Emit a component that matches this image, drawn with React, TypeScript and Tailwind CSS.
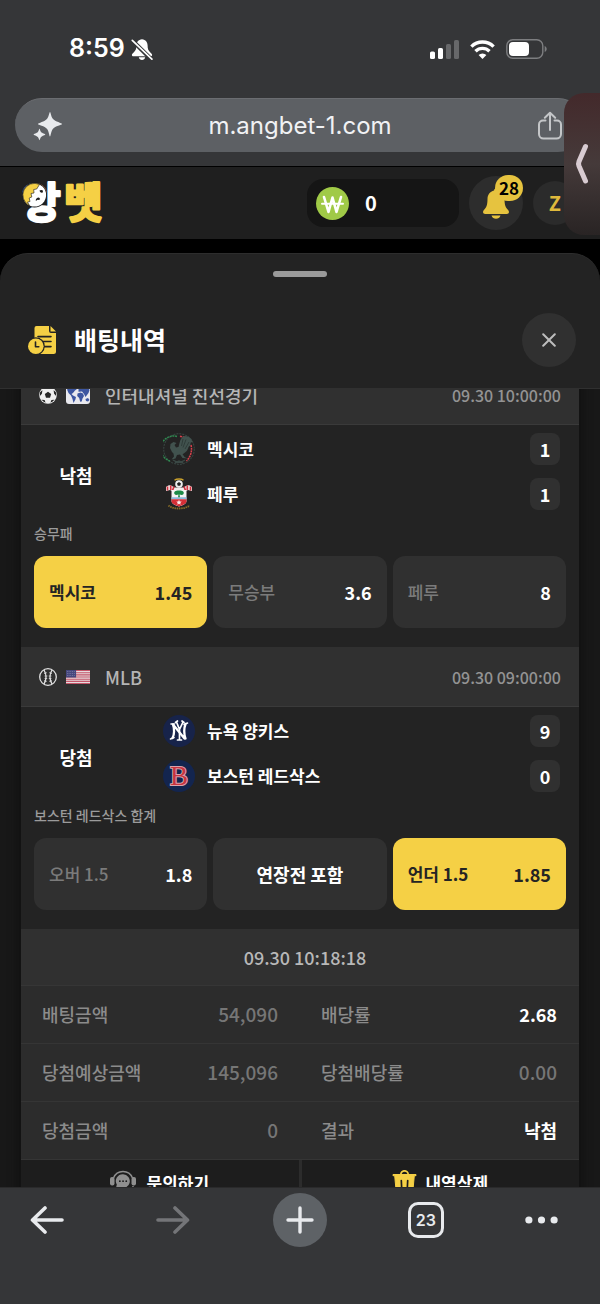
import type { ReactNode } from "react";

const YELLOW = "#f5d045";

function BellOffIcon() {
  return (
    <svg width="22" height="23" viewBox="0 0 22 23" aria-hidden="true">
      <path
        d="M11 1.200c-3.700.5-5.600 3-5.600 6.400 0 3.300-.7 4.900-2.500 6.600C1.700 15.300.900 15.900.900 16.900c0 .8.6 1.300 1.500 1.300h17.200c.9 0 1.500-.5 1.500-1.300 0-1-.8-1.600-2-2.700-1.800-1.700-2.500-3.300-2.500-6.600 0-3.400-1.900-5.900-5.600-6.400z"
        fill="#fff"
      />
      <path d="M7.800 19.300h6.400c-.4 1.700-1.600 2.700-3.200 2.700s-2.800-1-3.200-2.700z" fill="#fff" />
      <path d="M2 3.300l18 17.600" stroke="#353638" strokeWidth="4.200" />
      <path d="M1.300 2.300l19.600 18.900" stroke="#fff" strokeWidth="1.700" strokeLinecap="round" />
    </svg>
  );
}

function SignalIcon() {
  return (
    <svg width="29" height="19" viewBox="0 0 29 19" aria-hidden="true">
      <rect x="0" y="11.500" width="5" height="7.500" rx="1.600" fill="#fff" />
      <rect x="8" y="8" width="5" height="11" rx="1.600" fill="#fff" />
      <rect x="16" y="4" width="5" height="15" rx="1.600" fill="#67686a" />
      <rect x="24" y="0" width="5" height="19" rx="1.600" fill="#67686a" />
    </svg>
  );
}

function WifiIcon() {
  return (
    <svg width="25" height="19" viewBox="0 0 25 19" fill="none" stroke="#fff" strokeWidth="3.400" aria-hidden="true">
      <path d="M1.400 6.600a15.700 15.700 0 0 1 22.200 0" />
      <path d="M5.500 11.300a9.900 9.900 0 0 1 14 0" />
      <path d="M12.500 19l-3.900-4a5.500 5.500 0 0 1 7.800 0z" fill="#fff" stroke="none" />
    </svg>
  );
}

function BatteryIcon() {
  return (
    <svg width="41" height="20" viewBox="0 0 41 20" aria-hidden="true">
      <rect x=".8" y=".8" width="36" height="18.400" rx="6" fill="none" stroke="#7d7e80" strokeWidth="1.400" />
      <rect x="3" y="3" width="20" height="14" rx="4" fill="#fff" />
      <path d="M38.700 7c1.200.5 2 1.600 2 3s-.8 2.500-2 3z" fill="#7d7e80" />
    </svg>
  );
}

function SparkleIcon() {
  return (
    <svg width="30" height="30" viewBox="0 0 30 30" fill="#e8eaed" aria-hidden="true">
      <path d="M17 1c.7 0 .9 4.300 2.800 6.800C22.200 10.800 29 12 29 13s-6.800 2-9.200 5c-1.900 2.500-2.100 7.500-2.800 7.500s-1-5-2.900-7.500c-2.300-3-9.100-4-9.100-5s6.800-2.200 9.100-5.200C16 5.300 16.300 1 17 1z" />
      <path d="M6.500 17.700c.4 0 .6 2.200 1.500 3.300 1.200 1.300 4.300 1.900 4.300 2.500S9.200 24.800 8 26.100c-.9 1.100-1.100 3.200-1.500 3.200s-.7-2.100-1.600-3.200C3.700 24.800.600 24.100.600 23.500S3.700 22.300 4.900 21c.9-1.100 1.200-3.300 1.600-3.300z" />
    </svg>
  );
}

function ShareIcon() {
  return (
    <svg width="26" height="30" viewBox="0 0 26 30" fill="none" stroke="#c4c6c8" strokeWidth="2" strokeLinecap="round" strokeLinejoin="round" aria-hidden="true">
      <path d="M8.500 9.500H6a4 4 0 0 0-4 4V23a4.500 4.500 0 0 0 4.500 4.500h13A4.500 4.500 0 0 0 24 23v-9.500a4 4 0 0 0-4-4h-2.500" />
      <path d="M13 19V2M7.800 6.800L13 1.800l5.200 5" />
    </svg>
  );
}

function Logo() {
  return (
    <svg width="86" height="48" viewBox="0 0 86 48" role="img" aria-label="앙벳">
      <g fontFamily="'Noto Sans CJK KR', sans-serif" fontWeight="700" fontSize="42" strokeLinejoin="round" strokeLinecap="round" strokeWidth="2.600">
        <text x="1" y="39" fill="#fff" stroke="#fff">앙</text>
        <text x="43" y="39" fill={YELLOW} stroke={YELLOW}>벳</text>
      </g>
      <circle cx="13.500" cy="16" r="12.500" fill="#1a1a1a" />
      <circle cx="13.500" cy="16" r="11.600" fill="#fff" />
      <path d="M18.500 5.500A11.600 11.600 0 1 0 8.500 26.500l-2-3.500 2.500-.5-.8-3.500 2.600-1-.8-3.500 3-.5-.3-3.500 3-.5z" fill={YELLOW} stroke="#1a1a1a" strokeWidth=".6" strokeLinejoin="round" />
      <path d="M18.500 11.500c1.200-.9 2.500-.8 3.600.2l-.6 2c-1 .2-2-.2-2.500-1zM14.800 22c-.2-1.900 1-3.400 3.200-3.400l1.200 1.300c-.5.9-1.500 1.300-2.600.9z" fill="#1a1a1a" />
    </svg>
  );
}

function WonIcon() {
  return (
    <svg width="33" height="33" viewBox="0 0 33 33" aria-hidden="true">
      <circle cx="16.500" cy="16.500" r="16.500" fill="#a0ca47" />
      <g fill="none" stroke="#fff" strokeLinejoin="round" strokeLinecap="round">
        <path d="M8 10l4.500 15 4-14.500 4 14.500L25 10" strokeWidth="2.600" />
        <path d="M6 16.700h21" strokeWidth="2" />
      </g>
    </svg>
  );
}

function BellIcon() {
  return (
    <svg width="26" height="31" viewBox="0 0 26 31" fill="#e6c33f" aria-hidden="true">
      <path d="M11 2.500a2 2 0 0 1 4 0c4 1 6.500 4.300 6.500 8.500 0 6 1 8.300 3.600 11 1.600 1.700.9 4-1.400 4H2.300C0 26-.7 23.700.9 22c2.600-2.700 3.600-5 3.600-11 0-4.200 2.500-7.500 6.500-8.500z" />
      <path d="M8.500 27.500h9c-.7 2.200-2.400 3.300-4.500 3.300s-3.800-1.100-4.500-3.300z" />
    </svg>
  );
}

function HistoryIcon() {
  return (
    <svg width="28" height="28" viewBox="0 0 28 28" aria-hidden="true">
      <path d="M8.500 0H21v5a2 2 0 0 0 2 2h5v18.500a2.500 2.500 0 0 1-2.500 2.500H12V12H6.500V2a2 2 0 0 1 2-2z" fill={YELLOW} />
      <path d="M22.500 0L28 5.500h-5.500z" fill={YELLOW} />
      <path d="M10 10.600h13M14 15.500h9M15 20.600h8" stroke="#232323" strokeWidth="1.600" strokeLinecap="round" />
      <circle cx="7.800" cy="20.200" r="9" fill="#232323" />
      <circle cx="7.800" cy="20.200" r="7.800" fill={YELLOW} />
      <path d="M7.500 16v4.700h3.300" fill="none" stroke="#232323" strokeWidth="1.600" strokeLinecap="round" strokeLinejoin="round" />
    </svg>
  );
}

function SoccerIcon() {
  return (
    <svg width="18" height="18" viewBox="0 0 18 18" aria-hidden="true">
      <circle cx="9" cy="9" r="8.800" fill="#efefef" />
      <g fill="#262626">
        <path d="M9 5.700l3.200 2.300-1.200 3.800H7L5.800 8z" />
        <path d="M6 1.300L9 3l3-1.700a8.300 8.300 0 0 0-6 0zM1 6.500L.9 10l2-2.200.5-3.500A8 8 0 0 0 1 6.500zM17 6.500l.1 3.500-2-2.200-.5-3.500A8 8 0 0 1 17 6.500zM2.600 13.800l3 .1 1 2.900a8 8 0 0 1-4-3zM15.400 13.800l-3 .1-1 2.900a8 8 0 0 0 4-3z" />
      </g>
    </svg>
  );
}

function WorldFlag() {
  return (
    <svg width="24" height="18" viewBox="0 0 24 18" aria-hidden="true">
      <rect width="24" height="18" rx="3" fill="#e9e9ee" />
      <g fill="#3d56a0">
        <path d="M1 3.500L5 1h5l1 2-2 1.500L7 7 5.500 8 7 9.500l3 1.500-.6 2.500L7.500 17 6.500 13 5 9.500 2.500 7z" />
        <path d="M11.500 7.500l3-1 2.500 1 1 2.500-1.500 2.500-.8 3-1.500.300-1-3.800-2-2z" />
        <path d="M12.500 2.500L16 1l6.500.5 1 2.500-1 3-1.500 2-1.500 2-1.500-3-2-2.500-3.500.300z" />
        <path d="M19.500 13l2.500-1 1.500 2-1.500 1.500-2-.5z" />
      </g>
    </svg>
  );
}

function BaseballIcon() {
  return (
    <svg width="18" height="18" viewBox="0 0 18 18" fill="none" stroke="#e0e0e0" aria-hidden="true">
      <circle cx="9" cy="9" r="8.300" strokeWidth="1.300" />
      <path d="M5 2c2.600 4.500 2.600 9.500 0 14M13 2c-2.600 4.500-2.600 9.500 0 14" strokeWidth="1.300" />
      <path d="M5 5.500l2.800-.8M5.600 8h2.800M5.600 10.500h2.600M5 12.700l2.700.8M13 5.500l-2.800-.8M12.400 8H9.700M12.400 10.500H9.800M13 12.700l-2.700.8" strokeWidth=".8" />
    </svg>
  );
}

function UsFlag() {
  return (
    <svg width="24" height="14" viewBox="0 0 25 14" preserveAspectRatio="none" aria-hidden="true">
      <rect width="25" height="14" fill="#e6dadd" />
      <path d="M0 .5h25M0 2.700h25M0 4.900h25M0 7h25M0 9.200h25M0 11.400h25M0 13.500h25" stroke="#c4566a" strokeWidth="1.100" />
      <rect width="10.500" height="7.500" fill="#45477d" />
      <path d="M1 1.500h9M1 3.500h9M1 5.500h9" stroke="#9596b8" strokeWidth=".7" strokeDasharray=".8 1" />
    </svg>
  );
}

function MexicoCrest() {
  return (
    <svg width="32" height="32" viewBox="0 0 32 32" fill="none" aria-hidden="true">
      <circle cx="16" cy="16" r="15.300" stroke="#36423f" strokeWidth="1.200" strokeDasharray="2 1" />
      <path d="M14 3.500A12.700 12.700 0 0 0 7 28" stroke="#2f8a50" strokeWidth="1.500" strokeDasharray="2 .7" />
      <path d="M17 3.200l4 1M28 12c1.500 6-.5 12-4.500 16" stroke="#d8414c" strokeWidth="1.500" strokeDasharray="2 .7" />
      <path d="M22 3c4 0 7 3 7.500 6-1 .5-1.500 0-2 1 .5 2-1 3-2 4-.5 3-3.500 6.500-6 7l2 3 3 1.500-5-.5-2.500-3.500-3 .5-1.500 3.500-4 1 2.500-3-.5-3L9 19l-2-4 .5-4 3-2 3 1-2 2 1.500 2.500 2.500-.5 1-4c1-4 2.500-6.500 5-7z" fill="#41524e" />
      <path d="M20 6l-1.500 7M23 6.500l-3 8M26 9l-4 7" stroke="#2a3634" strokeWidth=".8" />
      <path d="M10 27c4 3 8 3 12 0M12 30l4-2 4 2" stroke="#3a4845" strokeWidth="1.500" />
    </svg>
  );
}

function SouthamptonCrest() {
  return (
    <svg width="32" height="32" viewBox="0 0 32 32" aria-hidden="true">
      <path d="M11.500 2.200c2-1.700 7-1.700 9 0" fill="none" stroke="#c9a02c" strokeWidth="1.400" />
      <path d="M3 9c3-3 6-2 8 .5h10c2-2.500 5-3.500 8-.5v4l-4-1-2 1H9l-2-1-4 1z" fill="#f3eaea" />
      <path d="M4.500 8.500v4M7.700 7.500V12M11 8.500l-1.500 4M27.500 8.500v4M24.300 7.500V12M21 8.500l1.500 4" stroke="#d23240" strokeWidth="1.700" />
      <circle cx="16" cy="6" r="3.800" fill="#eee" />
      <path d="M16 4l2 1.500-.8 2.200h-2.400L14 5.500z" fill="#222" />
      <path d="M8.500 12h15v11c0 3-4 4.500-7.500 5.500-3.500-1-7.500-2.500-7.500-5.500z" fill="#f4f4f4" />
      <path d="M8.500 19.300h15v2h-15z" fill="#8cb9dc" />
      <path d="M8.500 21.300h15v2c0 2.500-4 4-7.500 5.200-3.500-1.200-7.500-2.700-7.500-5.200z" fill="#d62f36" />
      <path d="M16 12.500c4 0 5.500 1.500 4.500 3.500-1 1.500-2.500 1-4 .5l.5 2.800h-2l.5-2.800c-1.500.5-3 1-4-.5-1-2 .5-3.500 4.500-3.500z" fill="#1c8b48" />
      <path d="M16 21.700l.8 1.700 1.900.2-1.400 1.300.4 1.900-1.700-1-1.700 1 .4-1.900-1.400-1.300 1.900-.2z" fill="#f6eaea" />
      <path d="M5.500 27.500c4.500 4 16.500 4 21 0" fill="none" stroke="#8a6d26" strokeWidth="1.800" strokeDasharray="1.500 .7" />
    </svg>
  );
}

function YankeesLogo() {
  return (
    <svg width="32" height="32" viewBox="0 0 32 32" aria-hidden="true">
      <circle cx="16" cy="16" r="16" fill="#17234a" />
      <g fill="none" stroke="#fff" strokeLinecap="round" strokeLinejoin="round">
        <path d="M10 9.500c1.500 4 1.500 10-.5 13.500M10 9.500l11.500 14M22.500 9c-1.500 4-1.500 10 0 14.500" strokeWidth="2.300" />
        <path d="M8 9h3.500M21 9.500L24.500 8M7.500 24l3.500-1.500" strokeWidth="1.600" />
        <path d="M13.500 7l3 7.500L20 7M16.500 14v11M12.500 7.500l2-1.500M19 6l2 1.500M14.500 25h4" strokeWidth="1.700" />
      </g>
    </svg>
  );
}

function RedSoxLogo() {
  return (
    <svg width="32" height="32" viewBox="0 0 32 32" aria-hidden="true">
      <circle cx="16" cy="16" r="16" fill="#13254f" />
      <text
        x="16"
        y="25"
        fontSize="27"
        fontFamily="'Liberation Serif', serif"
        textAnchor="middle"
        fill="#c8343f"
        stroke="#d9a3ae"
        strokeWidth="2"
        paintOrder="stroke"
      >
        B
      </text>
    </svg>
  );
}

function HeadsetIcon() {
  return (
    <svg width="26" height="26" viewBox="0 0 26 26" aria-hidden="true">
      <path d="M3.500 8a10.200 10.200 0 0 1 19 0" fill="none" stroke="#8f8f8f" strokeWidth="1.400" />
      <rect x="0" y="7" width="4.500" height="8.500" rx="2" fill="#8f8f8f" />
      <rect x="21.500" y="7" width="4.500" height="8.500" rx="2" fill="#8f8f8f" />
      <path d="M13 4.200a6.900 6.900 0 1 1-3.500 12.900L6 18l.8-3.400A6.900 6.900 0 0 1 13 4.200z" fill="#8f8f8f" />
      <path d="M9.800 11.200h.1M13 11.200h.1M16.200 11.200h.1" stroke="#1d1d1d" strokeWidth="1.700" strokeLinecap="round" />
      <path d="M23 16c0 4-3 6-7 6.500" fill="none" stroke="#8f8f8f" strokeWidth="1.400" />
    </svg>
  );
}

function TrashIcon() {
  return (
    <svg width="25" height="26" viewBox="0 0 25 26" aria-hidden="true">
      <path d="M8.800 4.500a3.700 3.700 0 0 1 7.400 0" fill="none" stroke={YELLOW} strokeWidth="1.700" />
      <path d="M1 4.500h23v1.200h-1.700L20.500 25h-16L2.700 5.700H1z" fill={YELLOW} stroke={YELLOW} strokeLinejoin="round" />
      <path d="M9.300 10.500l.5 10M15.700 10.500l-.5 10" stroke="#1d1d1d" strokeWidth="1.700" strokeLinecap="round" />
    </svg>
  );
}

interface Team {
  name: string;
  score: number;
  crest: ReactNode;
}

interface Pick {
  label: string;
  odds?: string;
  selected?: boolean;
}

interface Match {
  sport: ReactNode;
  flag: ReactNode;
  league: string;
  time: string;
  status: string;
  teams: Team[];
  market: string;
  picks: Pick[];
}

const matches: Match[] = [
  {
    sport: <SoccerIcon />,
    flag: <WorldFlag />,
    league: "인터내셔널 친선경기",
    time: "09.30 10:00:00",
    status: "낙첨",
    teams: [
      { name: "멕시코", score: 1, crest: <MexicoCrest /> },
      { name: "페루", score: 1, crest: <SouthamptonCrest /> },
    ],
    market: "승무패",
    picks: [
      { label: "멕시코", odds: "1.45", selected: true },
      { label: "무승부", odds: "3.6" },
      { label: "페루", odds: "8" },
    ],
  },
  {
    sport: <BaseballIcon />,
    flag: <UsFlag />,
    league: "MLB",
    time: "09.30 09:00:00",
    status: "당첨",
    teams: [
      { name: "뉴욕 양키스", score: 9, crest: <YankeesLogo /> },
      { name: "보스턴 레드삭스", score: 0, crest: <RedSoxLogo /> },
    ],
    market: "보스턴 레드삭스 합계",
    picks: [
      { label: "오버 1.5", odds: "1.8" },
      { label: "연장전 포함" },
      { label: "언더 1.5", odds: "1.85", selected: true },
    ],
  },
];

const summary = [
  ["배팅금액", "54,090", "배당률", "2.68"],
  ["당첨예상금액", "145,096", "당첨배당률", "0.00"],
  ["당첨금액", "0", "결과", "낙첨"],
];

function PickButton({ pick }: { pick: Pick }) {
  if (!pick.odds) {
    return (
      <button type="button" className="h-[72px] rounded-xl bg-[#303030] text-lg font-bold text-white">
        {pick.label}
      </button>
    );
  }
  return (
    <button
      type="button"
      className={
        pick.selected
          ? "flex h-[72px] items-center justify-between rounded-xl bg-[#f5d045] px-[15px] text-[#242424]"
          : "flex h-[72px] items-center justify-between rounded-xl bg-[#303030] px-[15px] text-white"
      }
    >
      <span className={pick.selected ? "text-[17px] font-bold" : "text-[17px] font-medium text-[#7b7b7b]"}>{pick.label}</span>
      <span className="text-lg font-bold">{pick.odds}</span>
    </button>
  );
}

function MatchCard({ match }: { match: Match }) {
  return (
    <section>
      <header className="flex h-[60px] items-center border-b border-[#3a3a3a] bg-[#303030] px-[18px]">
        {match.sport}
        <span className="ml-[9px]">{match.flag}</span>
        <h2 className="ml-[15px] text-lg font-medium text-[#b5b5b5]">{match.league}</h2>
        <time className="ml-auto text-base font-medium text-[#939393]">{match.time}</time>
      </header>
      <div className="pt-2 pb-[18px]">
        <div className="flex items-center pr-[19px]">
          <strong className="w-[110px] pt-[6px] text-center text-lg font-bold text-white">{match.status}</strong>
          <ul className="flex flex-1 flex-col gap-[13px] pl-8">
            {match.teams.map((team) => (
              <li key={team.name} className="flex h-8 items-center">
                {team.crest}
                <span className="ml-3 text-[17px] font-bold text-white">{team.name}</span>
                <span className="ml-auto flex h-8 w-[30px] items-center justify-center rounded-lg bg-[#303030] text-lg font-bold text-white">
                  {team.score}
                </span>
              </li>
            ))}
          </ul>
        </div>
        <h3 className="flex h-[46px] items-center px-[13px] text-sm font-medium text-[#9b9b9b]">{match.market}</h3>
        <div className="grid grid-cols-3 gap-[6px] px-[13px] pb-px">
          {match.picks.map((pick) => (
            <PickButton key={pick.label} pick={pick} />
          ))}
        </div>
      </div>
    </section>
  );
}

export default function App() {
  return (
    <div className="relative flex h-screen flex-col overflow-hidden bg-black font-['Noto_Sans_CJK_KR',sans-serif]">
      <div className="flex-none border-b border-black bg-[#353638] pb-[14px]">
        <div className="flex h-[98px] items-center pr-[53px] pl-[69px]">
          <span className="font-['Inter',sans-serif] text-[25px] font-semibold text-white">8:59</span>
          <span className="ml-[6px]">
            <BellOffIcon />
          </span>
          <span className="ml-auto flex items-center gap-[11px]">
            <SignalIcon />
            <WifiIcon />
            <BatteryIcon />
          </span>
        </div>
        <div className="mx-[15px] flex h-[54px] items-center justify-between rounded-full border-t border-[#6b6d71] bg-[#5d6064] pr-[22px] pl-[18px]">
          <button type="button" aria-label="AI">
            <SparkleIcon />
          </button>
          <a href="#address" className="font-['Inter',sans-serif] text-2xl text-[#f1f2f4]">
            m.angbet-1.com
          </a>
          <button type="button" aria-label="공유">
            <ShareIcon />
          </button>
        </div>
      </div>

      <div className="flex h-[72px] flex-none items-center gap-[10px] bg-[#1f1f1f] pr-[23px] pl-[21px]">
        <a href="#home" className="mr-auto">
          <Logo />
        </a>
        <div className="flex h-12 w-[152px] items-center rounded-2xl bg-[#151515] px-[9px]">
          <WonIcon />
          <span className="ml-4 text-xl font-bold text-white">0</span>
        </div>
        <button type="button" aria-label="알림" className="relative flex size-[54px] items-center justify-center rounded-full bg-[#2d2d2d]">
          <BellIcon />
          <span className="absolute -top-px right-0 flex h-[26px] w-7 items-center justify-center rounded-full bg-[#e6c33f] text-[17px] font-bold text-black">
            28
          </span>
        </button>
        <button type="button" className="size-11 rounded-full bg-[#2b2b2b] text-xl font-bold text-[#dfb93c]">
          Z
        </button>
      </div>

      <main className="mt-[14px] flex min-h-0 flex-1 flex-col overflow-hidden rounded-t-[28px] border-t border-[#2d2d2d] bg-[#232323]">
        <div className="flex-none border-b border-[#303030] pt-[17px] pb-[21px]">
          <div className="mx-auto h-[6px] w-[54px] rounded-full bg-[#9a9a9a]" />
          <div className="mt-9 flex items-center pr-6 pl-7">
            <HistoryIcon />
            <h1 className="ml-[18px] text-[25px] font-bold text-white">배팅내역</h1>
            <button type="button" aria-label="닫기" className="ml-auto flex size-[54px] items-center justify-center rounded-full bg-[#303030]">
              <svg width="14" height="14" viewBox="0 0 14 14" stroke="#bdbdbd" strokeWidth="2" strokeLinecap="round" aria-hidden="true">
                <path d="M1.200 1.200l11.600 11.600M12.800 1.200L1.200 12.800" />
              </svg>
            </button>
          </div>
        </div>

        <div className="min-h-0 flex-1 overflow-hidden bg-[#181818] px-[21px]">
          <article className="-mt-6 bg-[#232323] shadow-[0_0_9px_2px_#101010]">
            {matches.map((match) => (
              <MatchCard key={match.league} match={match} />
            ))}
            <table className="w-full table-fixed border-collapse bg-[#2c2c2c] text-lg">
              <thead>
                <tr className="h-14 border-b border-[#363636] bg-[#303030]">
                  <th colSpan={4} className="pl-[10px] font-medium text-[#b8b8b8]">
                    09.30 10:18:18
                  </th>
                </tr>
              </thead>
              <tbody>
                {summary.map(([leftLabel, leftValue, rightLabel, rightValue]) => (
                  <tr key={leftLabel} className="h-[58px] border-b border-[#353535]">
                    <th scope="row" className="pl-[21px] text-left font-medium whitespace-nowrap text-[#8b8b8b]">
                      {leftLabel}
                    </th>
                    <td className="pr-[22px] text-right text-[19px] font-medium text-[#767676]">{leftValue}</td>
                    <th scope="row" className="pl-[21px] text-left font-medium whitespace-nowrap text-[#8b8b8b]">
                      {rightLabel}
                    </th>
                    <td
                      className={
                        rightValue === "0.00"
                          ? "pr-[22px] text-right text-[19px] font-medium text-[#767676]"
                          : "pr-[22px] text-right text-lg font-bold text-white"
                      }
                    >
                      {rightValue}
                    </td>
                  </tr>
                ))}
              </tbody>
            </table>
            <div className="grid grid-cols-2 gap-[3px] bg-[#2c2c2c]">
              <button type="button" className="flex h-[46px] items-center justify-center gap-[10px] bg-[#1d1d1d] text-[17px] font-bold text-white">
                <HeadsetIcon />
                문의하기
              </button>
              <button type="button" className="flex h-[46px] items-center justify-center gap-2 bg-[#1d1d1d] text-[17px] font-bold text-white">
                <TrashIcon />
                내역삭제
              </button>
            </div>
          </article>
        </div>
      </main>

      <nav className="flex h-[117px] flex-none items-start justify-between border-t border-[#2a2a2b] bg-[#353638] pt-[5px] pr-[42px] pl-5">
        <button type="button" aria-label="뒤로" className="flex size-[54px] items-center justify-center">
          <svg width="34" height="28" viewBox="0 0 34 28" fill="none" stroke="#e8eaed" strokeWidth="3.600" strokeLinecap="round" strokeLinejoin="round" aria-hidden="true">
            <path d="M32 14H3M15 2L2.500 14 15 26" />
          </svg>
        </button>
        <button type="button" aria-label="앞으로" className="flex size-[54px] items-center justify-center">
          <svg width="34" height="28" viewBox="0 0 34 28" fill="none" stroke="#747578" strokeWidth="3.600" strokeLinecap="round" strokeLinejoin="round" aria-hidden="true">
            <path d="M2 14h29M19 2l12.500 12L19 26" />
          </svg>
        </button>
        <button type="button" aria-label="새 탭" className="flex size-[54px] items-center justify-center rounded-full bg-[#5e6266]">
          <svg width="28" height="28" viewBox="0 0 28 28" stroke="#e8eaed" strokeWidth="3.400" strokeLinecap="round" aria-hidden="true">
            <path d="M14 2v24M2 14h24" />
          </svg>
        </button>
        <button type="button" className="flex size-[54px] items-center justify-center">
          <span className="flex size-9 items-center justify-center rounded-[10px] border-3 border-[#e8eaed] font-['Inter',sans-serif] text-base font-semibold text-[#e8eaed]">
            23
          </span>
        </button>
        <button type="button" aria-label="더보기" className="flex h-[54px] w-[33px] items-center justify-center">
          <svg width="34" height="8" viewBox="0 0 34 8" fill="#e8eaed" aria-hidden="true">
            <circle cx="4" cy="4" r="3.700" />
            <circle cx="17" cy="4" r="3.700" />
            <circle cx="30" cy="4" r="3.700" />
          </svg>
        </button>
      </nav>

      <button
        type="button"
        aria-label="패널 열기"
        className="absolute top-[93px] right-0 flex h-[142px] w-9 items-center justify-center rounded-l-[20px] bg-linear-to-b from-[#43292b] via-[#453a3a] to-[#292424]"
      >
        <svg width="14" height="42" viewBox="0 0 14 42" fill="none" stroke="#d8cbd1" strokeWidth="5" strokeLinecap="round" strokeLinejoin="round" aria-hidden="true">
          <path d="M10.500 3.500L4 18.500a6 6 0 0 0 0 4.500l6.500 15" />
        </svg>
      </button>
    </div>
  );
}
